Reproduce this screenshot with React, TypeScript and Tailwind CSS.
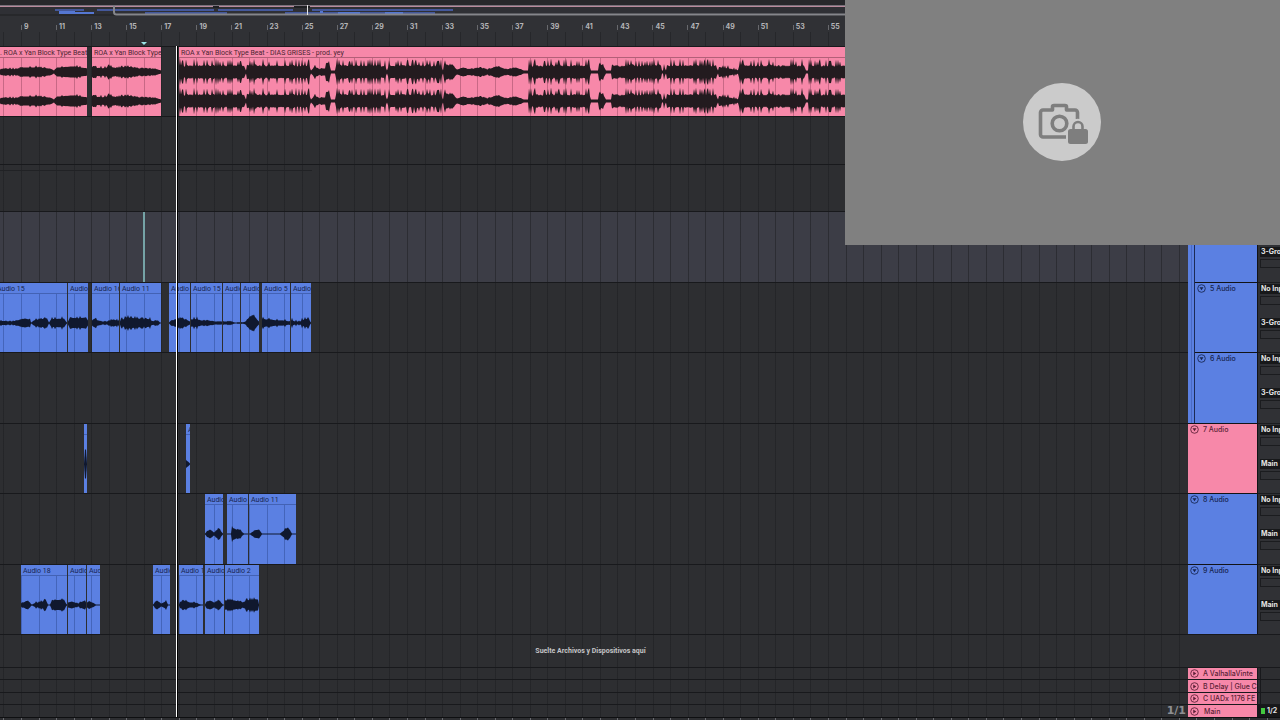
import { ReactNode } from 'react';

// Timeline scale: 46 bars take 807 pixels
const BAR = 807 / 46;
const FIRST_BAR_X = 21;

// [x, body, peak] in pixels, x is counted from the left edge of the window
type Point = [number, number, number];

interface ClipData {
  name: string;
  start: number;
  end: number;
  wave: Point[];
}

interface Track {
  name?: string;
  tone?: 'blue' | 'pink';
  grouped?: boolean;
  summaryWidth?: number;
  output?: string;
  height: string;
  lane?: string;
  clips?: ClipData[];
}

const SONG = 'ROA x Yan Block Type Beat - DIAS GRISES - prod. yey';

// A loud passage from a to b, closed by a short pinch
const loud = (a: number, b: number): Point[] => [[a, 5, 13], [b - 2, 5, 13], [b, 1, 1]];

const songWave: Point[] = [
  ...loud(179, 246), ...loud(248, 311), [315, 5, 7], [319, 2, 3], [322, 2, 9], [330, 2, 13], [331, 1, 1], [335, 1, 1],
  ...loud(336, 387), ...loud(389, 443), [444, 6, 12], [452, 6, 8], [457, 2, 3], [463, 4, 4], [470, 2, 3], [480, 4, 5],
  [487, 2, 3], [498, 5, 6], [507, 2, 3], [516, 4, 5], [524, 1, 1], [528, 1, 1],
  ...loud(529, 591), [598, 1, 1], [599, 7, 11], [603, 6, 8], [606, 1, 1], [611, 1, 1],
  ...loud(611, 662), [663, 1, 1], [664, 5, 9], [666, 1, 1], ...loud(668, 718), [719, 4, 6], [727, 3, 8], [738, 1, 2],
  ...loud(739, 806), [808, 1, 1], ...loud(809, 900), ...loud(902, 990), ...loud(992, 1080), ...loud(1082, 1187),
];

const tracks: Track[] = [
  {
    tone: 'pink',
    height: 'h-[70px]',
    clips: [
      { name: `. ${SONG}`, start: -2, end: 87, wave: [[-2, 1, 1], [3, 3, 4], [17, 2, 4], [21, 4, 5], [36, 4, 6], [50, 3, 4], [54, 1, 1], [57, 4, 5], [74, 5, 8], [87, 3, 5]] },
      { name: SONG, start: 92, end: 161, wave: [[92, 4, 6], [105, 3, 6], [110, 5, 8], [117, 3, 5], [126, 5, 7], [140, 3, 4], [150, 3, 4], [158, 2, 3], [161, 1, 1]] },
      { name: SONG, start: 179, end: 1187, wave: songWave },
    ],
  },
  { height: 'h-[48px]' },
  { height: 'h-[47px]', summaryWidth: 312 },
  { tone: 'blue', name: '4 Audio', grouped: true, output: '3-Group', height: 'h-[71px]', lane: 'bg-[#3c3d46]' },
  {
    tone: 'blue', name: '5 Audio', grouped: true, output: '3-Group', height: 'h-[70px]',
    clips: [
      { name: 'Audio 15', start: -5, end: 67, wave: [[-5, 2, 3], [12, 1, 2], [18, 2, 3], [25, 4, 5], [30, 3, 4], [31, 0, 0], [34, 2, 4], [47, 4, 6], [49, 0, 0], [51, 3, 6], [64, 4, 7], [66, 1, 1]] },
      { name: 'Audio 15', start: 68, end: 88, wave: [[68, 1, 2], [70, 5, 8], [77, 4, 7], [86, 5, 8], [88, 2, 3]] },
      { name: 'Audio 16', start: 92, end: 119, wave: [[92, 2, 3], [96, 3, 5], [101, 1, 2], [108, 1, 2], [113, 3, 6], [119, 1, 3]] },
      { name: 'Audio 11', start: 120, end: 161, wave: [[120, 1, 4], [126, 5, 8], [136, 4, 7], [144, 3, 5], [150, 3, 6], [153, 1, 2], [158, 2, 4], [160, 0, 0]] },
      { name: 'Audio 2', start: 169, end: 190, wave: [[170, 1, 2], [175, 3, 4], [181, 4, 6], [186, 3, 4], [190, 1, 1]] },
      { name: 'Audio 15', start: 191, end: 222, wave: [[191, 3, 5], [197, 3, 7], [201, 2, 3], [208, 2, 3], [216, 1, 1], [222, 1, 2]] },
      { name: 'Audio 3', start: 223, end: 240, wave: [[223, 1, 2], [230, 1, 2], [235, 0, 1], [240, 0, 1]] },
      { name: 'Audio 4', start: 241, end: 259, wave: [[241, 0, 1], [246, 1, 2], [249, 5, 6], [253, 7, 9], [256, 4, 6], [259, 1, 2]] },
      { name: 'Audio 5', start: 262, end: 290, wave: [[262, 3, 6], [270, 3, 6], [275, 2, 4], [282, 2, 5], [290, 1, 2]] },
      { name: 'Audio 8', start: 291, end: 311, wave: [[291, 1, 6], [295, 1, 3], [300, 1, 2], [303, 2, 7], [308, 4, 6], [311, 0, 0]] },
    ],
  },
  { tone: 'blue', name: '6 Audio', grouped: true, output: '3-Group', height: 'h-[71px]' },
  {
    tone: 'pink', name: '7 Audio', output: 'Main', height: 'h-[70px]',
    clips: [
      { name: '', start: 84, end: 87, wave: [[85, 14, 15], [86, 14, 15]] },
      { name: 'Audio 9', start: 186, end: 190, wave: [[186, 3, 4], [188, 2, 3], [190, 0, 0]] },
    ],
  },
  {
    tone: 'blue', name: '8 Audio', output: 'Main', height: 'h-[71px]',
    clips: [
      { name: 'Audio 9', start: 205, end: 223, wave: [[206, 1, 2], [210, 4, 5], [214, 1, 1], [219, 5, 7], [222, 1, 1]] },
      { name: 'Audio 10', start: 227, end: 248, wave: [[231, 0, 0], [232, 6, 8], [236, 4, 6], [240, 3, 5], [244, 0, 0]] },
      { name: 'Audio 11', start: 249, end: 296, wave: [[250, 0, 0], [255, 3, 4], [259, 4, 6], [262, 0, 0], [280, 0, 0], [284, 3, 5], [288, 6, 8], [292, 0, 0]] },
    ],
  },
  {
    tone: 'blue', name: '9 Audio', output: 'Main', height: 'h-[70px]',
    clips: [
      { name: 'Audio 18', start: 21, end: 67, wave: [[21, 1, 2], [28, 4, 7], [30, 1, 2], [32, 0, 0], [34, 1, 3], [40, 2, 4], [46, 4, 7], [48, 0, 0], [50, 0, 0], [52, 4, 5], [64, 5, 7], [66, 1, 1]] },
      { name: 'Audio 12', start: 68, end: 86, wave: [[68, 2, 3], [72, 3, 4], [78, 1, 2], [85, 4, 7], [86, 2, 3]] },
      { name: 'Audio 13', start: 87, end: 100, wave: [[87, 2, 3], [90, 3, 4], [96, 0, 0]] },
      { name: 'Audio 14', start: 153, end: 170, wave: [[154, 1, 2], [157, 4, 5], [161, 1, 1], [166, 3, 5], [168, 0, 0]] },
      { name: 'Audio 17', start: 179, end: 203, wave: [[180, 2, 3], [184, 4, 6], [190, 2, 3], [195, 2, 3], [201, 0, 0]] },
      { name: 'Audio 1', start: 205, end: 224, wave: [[206, 2, 3], [210, 4, 5], [214, 2, 2], [219, 4, 6], [222, 1, 1]] },
      { name: 'Audio 2', start: 225, end: 259, wave: [[225, 4, 7], [234, 4, 6], [242, 2, 4], [249, 4, 8], [258, 5, 7]] },
    ],
  },
];

const returns = [
  { name: 'A ValhallaVinte', height: 'h-[12px]' },
  { name: 'B Delay | Glue C', height: 'h-[13px]' },
  { name: 'C UADx 1176 FE', height: 'h-[12px]' },
];

// Stable noise so that the wave keeps its shape between renders
const noise = (n: number) => {
  const v = Math.sin(n * 12.9898) * 43758.5453;
  return v - Math.floor(v);
};

function levelAt(points: Point[], x: number) {
  if (x < points[0][0] || x > points[points.length - 1][0]) return 0;
  let i = 1;
  while (i < points.length - 1 && points[i][0] < x) i++;
  const [x0, b0, p0] = points[i - 1];
  const [x1, b1, p1] = points[i];
  const t = x1 === x0 ? 1 : (x - x0) / (x1 - x0);
  const body = b0 + (b1 - b0) * t;
  const peak = p0 + (p1 - p0) * t;
  // one column in three or so is a transient, the rest stays near the body
  const n = noise(x);
  const spike = n > 0.62 && noise(x - 1) <= 0.8;
  return body + (peak - body) * (spike ? n : n * 0.3);
}

function wavePath(clip: ClipData, center: number) {
  const top: string[] = [];
  const bottom: string[] = [];
  for (let x = Math.max(clip.start, 0); x <= clip.end; x++) {
    const level = levelAt(clip.wave, x) + 0.4;
    top.push(`${x - clip.start},${(center - level).toFixed(1)}`);
    bottom.unshift(`${x - clip.start},${(center + level).toFixed(1)}`);
  }
  return `M${top.join('L')}L${bottom.join('L')}Z`;
}

// Bar lines for a box whose left edge is at the given x
const gridStyle = (x: number, color: string) => ({
  backgroundImage: `repeating-linear-gradient(90deg, ${color} 0px, ${color} 1px, transparent 1px, transparent ${BAR}px)`,
  backgroundPositionX: `${FIRST_BAR_X - 2 * BAR - x}px`,
  backgroundSize: `${BAR * 200}px 100%`,
});

function Clip({ clip, gap, stereo }: { clip: ClipData; gap: number; stereo: boolean }) {
  return (
    <div
      className={`flex shrink-0 flex-col overflow-hidden ${stereo ? 'bg-[#f788a9]' : 'bg-[#5b80e2]'}`}
      style={{ marginLeft: gap, width: clip.end - clip.start }}
    >
      <div
        className={`h-[11px] shrink-0 overflow-hidden border-b pl-[2px] font-['Roboto',sans-serif] text-[7px] leading-[12px] whitespace-nowrap ${
          stereo ? 'border-[#b35f78] text-[#4b2531]' : 'border-[#4362b4] text-[#17254f]'
        }`}
      >
        {clip.name}
      </div>
      <div className="min-h-0 flex-1" style={gridStyle(clip.start, stereo ? '#a8536e99' : '#3553a099')}>
        <svg className={`block h-full w-full ${stereo ? 'text-[#231b1f]' : 'text-[#10182e]'}`} aria-hidden="true">
          {stereo ? (
            <path d={wavePath(clip, 14) + wavePath(clip, 43)} fill="currentColor" />
          ) : (
            <path d={wavePath(clip, 29)} fill="currentColor" />
          )}
        </svg>
      </div>
    </div>
  );
}

function Lane({ children, className = '' }: { children?: ReactNode; className?: string }) {
  return (
    <div
      className={`flex min-w-0 flex-1 overflow-hidden border-t border-[#18191c] ${className}`}
      style={gridStyle(0, '#1c1d2080')}
    >
      {children}
    </div>
  );
}

function FoldButton({ open, label }: { open: boolean; label: string }) {
  return (
    <button type="button" aria-label={label} className="h-[9px] w-[9px] shrink-0">
      <svg viewBox="0 0 18 18" className="block h-full w-full" aria-hidden="true">
        <circle cx="9" cy="9" r="7.6" fill="none" stroke="currentColor" strokeWidth="1.7" />
        <path d={open ? 'M5 6.5h8L9 12.5z' : 'M6.5 5v8l6-4z'} fill="currentColor" />
      </svg>
    </button>
  );
}

function Routing({ label, value }: { label: string; value: string }) {
  return (
    <>
      <select
        aria-label={label}
        defaultValue={value}
        className="block h-[10px] w-16 appearance-none bg-[#17181a] pl-px text-[7px] leading-[10px] font-bold text-[#e4e4e4]"
      >
        <option>{value}</option>
      </select>
      <div className="mt-[2px] h-[9px] w-16 border border-[#1b1c1f]" />
    </>
  );
}

function TrackRow({ track }: { track: Track }) {
  const clips = track.clips ?? [];
  const pink = track.tone === 'pink';
  const stereo = pink && !track.name;
  return (
    <div className={`flex ${track.height}`}>
      <Lane className={track.lane}>
        {track.summaryWidth && <div className="mt-[5px] h-px bg-[#212225]" style={{ width: track.summaryWidth }} />}
        {clips.map((clip, i) => (
          <Clip key={clip.start} clip={clip} stereo={stereo} gap={clip.start - (i > 0 ? clips[i - 1].end : 0)} />
        ))}
      </Lane>
      <div className="flex w-[70px] shrink-0 bg-[#121316] pr-px">
        {track.grouped && (
          <div className="flex w-[7px] shrink-0 border-r border-[#1c2a55] bg-[#5b80e2]">
            <div className="ml-[3px] w-px bg-[#4a6ac4]" />
          </div>
        )}
        <div className="min-w-0 flex-1 border-t border-[#121316]">
          <div
            className={`flex h-full items-start gap-1 overflow-hidden pt-px pl-[2px] text-[7px] leading-[10px] font-medium whitespace-nowrap ${
              pink ? 'bg-[#f788a9] text-[#5a1f35]' : 'bg-[#5b80e2] text-[#17254f]'
            }`}
          >
            {track.name && (
              <>
                <FoldButton open label={`Fold ${track.name}`} />
                <span>{track.name}</span>
              </>
            )}
          </div>
        </div>
      </div>
      <div className="w-[22px] shrink-0 overflow-hidden border-t border-[#1b1c1f] bg-[#303135] pt-px pl-[2px]">
        {track.output && (
          <>
            <Routing label={`${track.name} input`} value="No Input" />
            <div className="h-[13px]" />
            <Routing label={`${track.name} output`} value={track.output} />
          </>
        )}
      </div>
    </div>
  );
}

// Miniature of the whole song with the visible part framed
function Overview() {
  return (
    <svg className="block h-4 w-full bg-[#27282b]" aria-hidden="true">
      <rect x="0" y="5" width="100%" height="1" fill="#77717a" />
      <rect x="0" y="6" width="100%" height="1" fill="#b98a9c" />
      <rect x="0" y="7" width="100%" height="7" fill="#2f3035" />
      <g fill="#44589b">
        <rect x="55" y="9" width="29" height="2" />
        <rect x="97" y="9" width="117" height="2" />
        <rect x="218" y="9" width="75" height="2" />
        <rect x="312" y="9" width="141" height="2" />
        <rect x="145" y="12" width="82" height="2" />
        <rect x="285" y="12" width="150" height="2" />
      </g>
      <g fill="#5577d2">
        <rect x="59" y="11" width="16" height="1" />
        <rect x="59" y="12" width="35" height="2" />
        <rect x="320" y="11" width="3" height="2" />
        <rect x="338" y="12" width="22" height="2" />
        <rect x="385" y="12" width="18" height="2" />
      </g>
      <rect x="213" y="6" width="6" height="2" fill="#1f2023" />
      <rect x="294" y="6" width="16" height="2" fill="#1f2023" />
      <path d="M114 6V12Q114 14.500 116.500 14.500H2000" fill="none" stroke="#85868b" strokeWidth="2" />
      <rect x="307" y="5" width="1" height="10" fill="#e5e5e5" />
    </svg>
  );
}

function Ruler() {
  const bars = Array.from({ length: 33 }, (_, i) => 9 + i * 2);
  return (
    <div className="h-[30px] bg-[#303135]">
      <div className="flex h-4 overflow-hidden pt-[6px] pl-[21px] text-[7px] leading-[10px] font-bold text-[#b5b5b8]">
        {bars.map((bar) => (
          <div key={bar} className="flex shrink-0 items-start gap-[2px]" style={{ width: BAR * 2 }}>
            <span className="mt-[3px] h-[5px] w-px bg-[#68696d]" />
            <span>{bar}</span>
          </div>
        ))}
      </div>
      <div className="h-[14px]" style={gridStyle(0, '#1c1d2080')} />
    </div>
  );
}

function CameraOff() {
  return (
    <div className="absolute top-0 right-0 z-20 flex h-[245px] w-[435px] items-center justify-center bg-[#808080] pr-[2px] pb-px">
      <div className="flex h-[78px] w-[78px] items-center justify-center rounded-full bg-[#cbcbcb]">
        <svg viewBox="0 0 104 104" className="h-[104px] w-[104px] shrink-0" role="img" aria-label="Camera locked">
          <g fill="none" stroke="#7e7e7e" strokeWidth="3.600" strokeLinejoin="round">
            <path d="M56 67H33a2.500 2.500 0 0 1-2.500-2.500V42.500a2.500 2.500 0 0 1 2.500-2.500H42.500V37a1.500 1.500 0 0 1 1.500-1.500H55a1.500 1.500 0 0 1 1.500 1.500V40H65a2.500 2.500 0 0 1 2.500 2.500V49" />
            <circle cx="49.500" cy="53.500" r="7.300" />
          </g>
          <path d="M63 60V56.500a4.800 4.800 0 0 1 9.600 0V60" fill="none" stroke="#cbcbcb" strokeWidth="6" />
          <rect x="56.800" y="57.800" width="22" height="17.500" rx="3.500" fill="#cbcbcb" />
          <path d="M63.500 60V56.500a4.500 4.500 0 0 1 9 0V60" fill="none" stroke="#7e7e7e" strokeWidth="2.600" />
          <rect x="58" y="59" width="20" height="15" rx="2.500" fill="#7e7e7e" />
        </svg>
      </div>
    </div>
  );
}

function App() {
  return (
    <main className="relative min-h-screen overflow-hidden bg-[#2d2e31] font-['Inter',sans-serif]">
      <Overview />
      <Ruler />

      <section aria-label="Arrangement">
        {tracks.map((track, i) => (
          <TrackRow key={i} track={track} />
        ))}

        <div className="flex h-[33px]">
          <Lane className="items-center justify-center pr-[7px] font-['Roboto',sans-serif] text-[7px] font-bold text-[#c4c4c6]">
            Suelte Archivos y Dispositivos aquí
          </Lane>
          <div className="w-[92px] shrink-0 border-t border-[#18191c]" />
        </div>

        {returns.map((track) => (
          <div key={track.name} className={`flex ${track.height}`}>
            <Lane />
            <div className="w-[70px] shrink-0 border-t border-r border-[#18191c]">
              <div className="flex h-full items-center gap-1 overflow-hidden bg-[#f788a9] pl-[2px] text-[7px] leading-[9px] font-medium whitespace-nowrap text-[#5a1f35]">
                <FoldButton open={false} label={`Unfold ${track.name}`} />
                <span>{track.name}</span>
              </div>
            </div>
            <div className="w-[22px] shrink-0 border-t border-[#18191c] pl-[2px]">
              <div className="h-full border-l border-[#18191c]" />
            </div>
          </div>
        ))}

        <div className="flex h-[13px]">
          <Lane className="items-center justify-end pr-[2px] font-['DejaVu_Sans',sans-serif] text-[11px] leading-[12px] font-bold text-[#8d8e92]">
            1/1
          </Lane>
          <div className="w-[70px] shrink-0 border-t border-r border-[#18191c]">
            <div className="flex h-full items-center gap-[5px] bg-[#f788a9] pl-[2px] text-[7px] leading-[9px] font-medium text-[#5a1f35]">
              <FoldButton open={false} label="Unfold Main" />
              <span>Main</span>
            </div>
          </div>
          <div className="flex w-[22px] shrink-0 items-center gap-[2px] overflow-hidden border-t border-[#18191c] bg-[#17181a] pl-[3px] text-[7px] font-bold text-[#e4e4e4]">
            <span className="h-[6px] w-1 shrink-0 bg-[#43c93f]" />
            1/2
          </div>
        </div>
        <div className="h-[3px] border-t border-[#0e0f11]" style={gridStyle(0, '#6a6b70')} />
      </section>

      {/* Insert marker */}
      <svg className="absolute top-[42px] left-[141px] h-[3px] w-[6px]" viewBox="0 0 6 3" aria-hidden="true">
        <path d="M0 0h6L3 3z" fill="#9ae4e6" />
      </svg>
      <div className="absolute top-[212px] left-[143px] h-[70px] w-[2px] bg-[#75a3a6]" />

      {/* Playhead */}
      <div className="absolute top-[46px] bottom-[3px] left-[176px] z-10 w-[2px] border-r border-black bg-white" />

      <CameraOff />
    </main>
  );
}

export default App;
